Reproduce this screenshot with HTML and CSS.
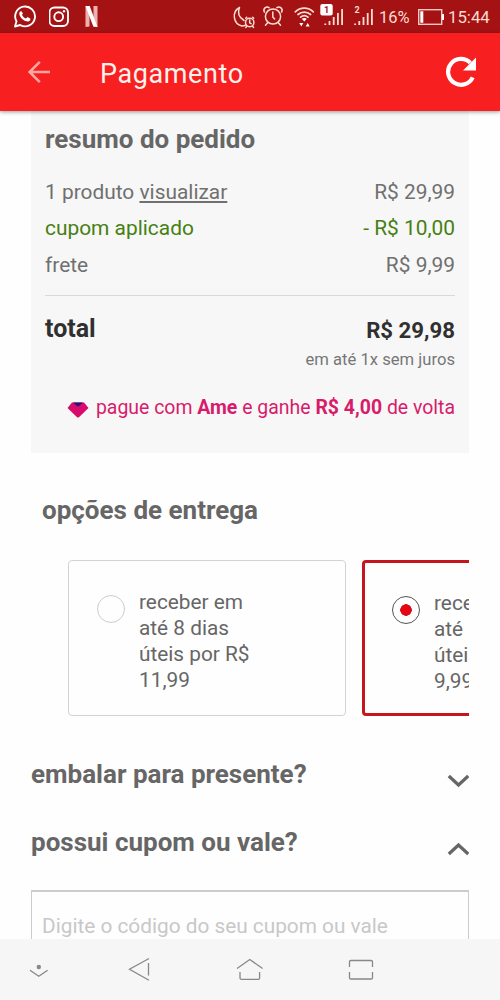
FILE: index.html
```html
<!DOCTYPE html>
<html lang="pt-BR">
<head>
<meta charset="utf-8">
<title>Pagamento</title>
<link rel="stylesheet" href="styles.css">
</head>
<body>
<div class="screen">
  <div class="status">
    <div class="status-left">
      <svg width="24" height="33" viewBox="13 0 24 33" fill="none" stroke="#fff" stroke-width="1.9">
        <path d="M15 26.5l1.5-5.2a9.9 9.9 0 1 1 3.7 3.7z" stroke-linejoin="round"/>
        <path d="M21.4 11.2c-1.1-.4-2.3 1-2.1 2.7.5 4 5.300 7.500 8.700 7.500 1.700-.1 2.900-1.900 2.200-3l-2.700-1.400-1.500 1.500c-1.900-.7-3.300-2.200-4-3.800l1-1.200z" fill="#fff" stroke="none"/>
      </svg>
      <svg width="22" height="33" viewBox="48.500 0 22 33" fill="none" stroke="#fff" stroke-width="1.900">
        <rect x="49" y="7.500" width="18.500" height="18.500" rx="5"/>
        <circle cx="58.200" cy="16.700" r="4.400"/>
        <circle cx="63.500" cy="11.300" r="1.200" fill="#fff" stroke="none"/>
      </svg>
      <svg width="16" height="33" viewBox="83.500 0 16 33">
        <path d="M86 6h4v20.500l-4 .5zM94 6h4v21l-4-.5z" fill="#efb0b0"/>
        <path d="M86 6h4.200L98 27l-4.200-.5z" fill="#fff"/>
      </svg>
    </div>
    <div class="status-right">
      <svg width="118" height="33" viewBox="232 0 118 33" fill="none" stroke="#fbdcd0" stroke-width="1.500" stroke-linecap="round">
        <path d="M240.500 7.500a10 10 0 0 0 2.500 18.500c1.500 0 2.500-.2 3.500-.8M240.500 7.500c-2.500 6 .5 10.500 4.500 13"/>
        <circle cx="250.700" cy="22.500" r="4.200"/>
        <path d="M250.700 20v2.800l1.400.8M246.700 18.200l1-1M254.700 18.200l-1-1M247.600 26.600l-.8.900M253.800 26.600l.8.900"/>
        <circle cx="274" cy="16.500" r="7.600"/>
        <path d="M273.800 12v5l1.800 2M265.400 12a3.300 3.300 0 0 1 4.700-4.400M282.600 12a3.300 3.300 0 0 0-4.700-4.400M268.800 22.500l-2.300 2.700M279.200 22.500l2.300 2.700"/>
        <path d="M296.300 11.800a13 13 0 0 1 18 0M299 14.500a9.300 9.300 0 0 1 12.600 0M301.600 17.200a5.800 5.800 0 0 1 7.400 0" stroke-width="1.700"/>
        <path d="M302.800 18.800q2.500-1.500 5 0l-2.500 2.800zM300.300 23h4l-2 3.600zM310.700 26.600h-4l2-3.600z" fill="#fff" stroke="none"/>
        <path d="M326.300 25v-1.500M330.500 25v-4M334.700 25v-8M338.900 25V13M343.100 25V9" stroke-width="1.800" stroke-linecap="butt"/>
        <rect x="321.300" y="4" width="12.400" height="11.500" rx="2" fill="#fff" stroke="none"/>
        <text x="327.500" y="13" class="sim sim-dark">1</text>
      </svg>
      <svg width="24" height="33" viewBox="352 0 24 33" fill="none" stroke="#fbdcd0" stroke-width="1.800">
        <path d="M355.100 25v-1.500M359.300 25v-4M363.500 25v-8M367.700 25V13M371.900 25V9"/>
        <text x="357" y="13" class="sim sim-light">2</text>
      </svg>
      <span class="pct">16%</span>
      <svg class="battery" width="26" height="33" viewBox="418 0 26 33">
        <rect x="418.700" y="9.700" width="23" height="14.600" fill="none" stroke="#f7c9c0" stroke-width="1.400"/>
        <path d="M420.300 11.200h3v11.600h-3zM442 14h2v6h-2z" fill="#fff"/>
      </svg>
      <span class="clock">15:44</span>
    </div>
  </div>

  <header class="appbar">
    <svg width="24" height="24" viewBox="27 60 24 24" fill="none" stroke="#ffa7a3" stroke-width="2.600"><path d="M50 72H30M39.800 61.800L29.600 72l10.200 10.200"/></svg>
    <h1 class="appbar-title">Pagamento</h1>
    <svg class="reload" width="32" height="32" viewBox="445 56 32 32"><path d="M472.700 77.300a12.900 12.900 0 1 1-2.400-14.400" fill="none" stroke="#fff" stroke-width="4.200"/><path d="M476 57.500v13h-13z" fill="#fff"/></svg>
  </header>

  <main class="content">
    <section class="summary">
      <h2 class="heading">resumo do pedido</h2>
      <div class="lines">
        <div class="line"><span>1 produto <a class="view">visualizar</a></span><span>R$ 29,99</span></div>
        <div class="line coupon"><span>cupom aplicado</span><span>- R$ 10,00</span></div>
        <div class="line"><span>frete</span><span>R$ 9,99</span></div>
      </div>
      <div class="total">
        <span class="total-label">total</span>
        <div class="total-side"><strong class="total-value">R$ 29,98</strong><span class="installments">em até 1x sem juros</span></div>
      </div>
      <div class="ame">
        <svg width="22" height="17" viewBox="0 0 22 17"><path d="M5 .6h12l4.500 5.300L12.200 15q-1.200 1-2.400 0L.5 5.900z" fill="#d80a6b"/><path d="M6 .6h10l-4 3.500q-1 .7-2 0z" fill="#26117e"/></svg>
        <span>pague com <b>Ame</b> e ganhe <b>R$ 4,00</b> de volta</span>
      </div>
    </section>

    <section class="delivery">
      <h2 class="heading delivery-heading">opções de entrega</h2>
      <div class="options">
        <div class="option"><span class="radio"></span><p class="option-text">receber em<br>até 8 dias<br>úteis por R$<br>11,99</p></div>
        <div class="option selected"><span class="radio"></span><p class="option-text">receber<br>até<br>úteis<br>9,99</p></div>
      </div>
    </section>

    <section class="fold">
      <h2 class="heading">embalar para presente?</h2>
      <svg width="22" height="14" viewBox="0 0 22 14" fill="none" stroke="#666" stroke-width="3.200"><path d="M1.800 2l9.700 9 9.700-9"/></svg>
    </section>
    <section class="fold">
      <h2 class="heading">possui cupom ou vale?</h2>
      <svg width="22" height="14" viewBox="0 0 22 14" fill="none" stroke="#666" stroke-width="3.200"><path d="M1.800 12l9.700-9 9.700 9"/></svg>
    </section>
    <div class="field">Digite o código do seu cupom ou vale</div>
  </main>

  <nav class="navbar">
    <svg width="372" height="61" viewBox="14 939 372 61" fill="none" stroke="#888" stroke-width="1.300">
      <path d="M30 970.200l8.800 6 8.800-6"/><circle cx="38.800" cy="967" r="2.200" fill="#888" stroke="none"/>
      <path d="M149 958.500l-19.500 10.800 19.500 11M148.500 963v12.500"/>
      <path d="M237 968.500l12.800-9 12.800 9M240 972v6q0 1.400 1.400 1.400h16.800q1.400 0 1.400-1.400v-6"/>
      <path d="M349.500 967v-5.200q0-1.300 1.300-1.300h20.400q1.300 0 1.300 1.300v5.200M349.500 972v5.700q0 1.300 1.300 1.300h20.400q1.300 0 1.300-1.300V972"/>
    </svg>
  </nav>
</div>
</body>
</html>
```

FILE: styles.css
```css
* { box-sizing: border-box; }
body { margin: 0; background: #fff; font-family: Roboto, "Noto Sans", sans-serif; color: #666; }
h1, h2, p { margin: 0; }
svg { display: block; flex: none; }
.screen { width: 500px; height: 1000px; overflow: hidden; display: flex; flex-direction: column; background: #fefefe; }

.status { height: 33px; flex: none; display: flex; justify-content: space-between; padding: 0 11px 0 13px; background: #a51214; color: #fbdcd0; }
.status-left { display: flex; gap: 12px; }
.status-right { display: flex; line-height: 35px; font-size: 16.500px; }
.status-right > svg + svg { margin-left: 3px; }
.pct { width: 38px; margin-left: 3px; margin-right: 1px; white-space: nowrap; }
.clock { width: 41px; margin-left: 4px; font-size: 16.800px; white-space: nowrap; }
.sim { font: bold 9px Roboto, sans-serif; text-anchor: middle; stroke: none; }
.sim-dark { fill: #a51214; }
.sim-light { fill: #fbdcd0; }

.appbar { height: 78px; flex: none; position: relative; z-index: 1; display: flex; align-items: center; padding: 0 23px 0 27px; background: #f71f1f; box-shadow: 0 1px 4px rgba(0,0,0,.4); }
.appbar-title { margin-left: 49px; font-size: 27px; line-height: 34px; font-weight: 400; letter-spacing: .6px; color: #fff2ed; padding-top: 3px; }
.reload { margin-left: auto; }

.content { flex: 1; min-height: 0; overflow: hidden; padding: 0 31px; }
.heading { font-size: 26px; line-height: 30px; font-weight: 700; color: #666; white-space: nowrap; }
.summary { height: 342px; padding: 13px 14px 0; background: #f7f7f7; }
.lines { margin-top: 20px; padding-bottom: 12px; border-bottom: 1px solid #d9d9d9; }
.line { display: flex; justify-content: space-between; font-size: 20.900px; line-height: 36.400px; color: #707070; }
.coupon { color: #478012; }
.view { text-decoration: underline; text-underline-offset: 2px; text-decoration-thickness: 1.500px; }
.total { display: flex; justify-content: space-between; padding-top: 18px; color: #303030; }
.total-label { font-size: 25px; line-height: 30px; font-weight: 700; }
.total-side { display: flex; flex-direction: column; align-items: flex-end; padding-top: 1px; }
.total-value { font-size: 22.200px; line-height: 30px; }
.installments { font-size: 16.650px; line-height: 30px; color: #777; }
.ame { display: flex; justify-content: flex-end; align-items: center; gap: 7px; margin-top: 18px; font-size: 19.450px; line-height: 30px; color: #d81b6b; white-space: nowrap; }
.ame svg { margin-top: 4px; }

.delivery { padding-top: 42px; }
.delivery-heading { padding-left: 11px; }
.options { display: flex; gap: 16px; margin-top: 35px; padding-left: 37px; overflow: hidden; }
.option { width: 278px; height: 156px; flex: none; display: flex; gap: 14px; padding: 28px 0 0 28px; border: 1px solid #d2d2d2; border-radius: 4px; }
.radio { width: 28px; height: 28px; flex: none; margin-top: 6px; border: 1px solid #ccc; border-radius: 50%; }
.option-text { font-size: 20.800px; line-height: 26px; white-space: nowrap; }
.selected { padding: 27px 0 0 27px; border: 3px solid #c5161f; }
.selected .radio { border: 1.500px solid #555; background: radial-gradient(circle, #e30613 5.500px, transparent 6px); }

.fold { display: flex; justify-content: space-between; align-items: center; height: 68px; }
.fold svg { margin-top: 13px; }
.delivery + .fold { margin-top: 24px; }
.field { height: 70px; margin-top: 14px; padding: 19px 10px; border: 1px solid #ccc; border-top-width: 2px; font-size: 20.800px; line-height: 30px; color: #c8c8c8; }
.navbar { height: 61px; flex: none; padding-left: 14px; background: #f6f6f6; }
```
